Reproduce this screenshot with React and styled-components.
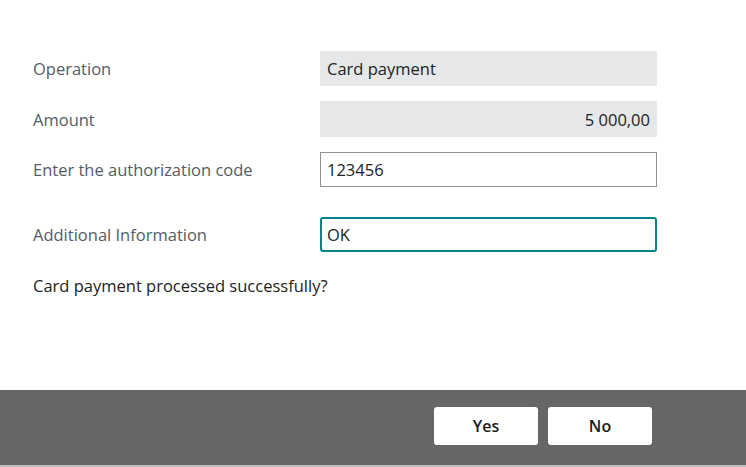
import React from 'react'
import styled, { createGlobalStyle } from 'styled-components'

const Global = createGlobalStyle`
  html, body { margin: 0; padding: 0; background: #fff; }
  body { font-family: "Open Sans", "Noto Sans", sans-serif; }
  * { box-sizing: border-box; }
`

export default function App() {
  return (
    <>
      <Global />
      <Page>
        <Form>
          <Row>
            <Label>Operation</Label>
            <ReadOnly>Card payment</ReadOnly>
          </Row>
          <Row $h={36}>
            <Label>Amount</Label>
            <ReadOnly $right>5 000,00</ReadOnly>
          </Row>
          <Row>
            <Label>Enter the authorization code</Label>
            <Field defaultValue="123456" />
          </Row>
          <Row $extra={15}>
            <Label>Additional Information</Label>
            <Field $focused defaultValue="OK" autoFocus />
          </Row>
          <Question>Card payment processed successfully?</Question>
        </Form>
        <Footer>
          <Button>Yes</Button>
          <Button>No</Button>
        </Footer>
        <Strip />
      </Page>
    </>
  )
}

const Page = styled.div`
  width: 746px;
  height: 467px;
  display: flex;
  flex-direction: column;
  overflow: hidden;
`

const Form = styled.div`
  flex: 1;
  padding: 51px 0 0 33px;
  display: flex;
  flex-direction: column;
  gap: 15px;
`

const Row = styled.div`
  display: grid;
  grid-template-columns: 287px 337px;
  align-items: center;
  height: ${p => p.$h || 35}px;
  margin-top: ${p => p.$extra || 0}px;
`

const Label = styled.div`
  font-size: 16.5px;
  color: #535c66;
`

const ReadOnly = styled.div`
  height: 100%;
  background: #e6e7e8;
  display: flex;
  align-items: center;
  justify-content: ${p => (p.$right ? 'flex-end' : 'flex-start')};
  padding: 0 7px;
  font-size: 16.5px;
  color: #222;
`

const Field = styled.input`
  height: 35px;
  width: 337px;
  border: ${p => (p.$focused ? '2px solid #00858a' : '1px solid #8a9099')};
  border-radius: ${p => (p.$focused ? '3px' : '0')};
  padding: 0 ${p => (p.$focused ? '5px' : '6px')};
  font-family: inherit;
  font-size: 16.5px;
  color: #222;
  caret-color: #111;
  outline: none;
  background: #fff;
`

const Question = styled.div`
  margin-top: 7px;
  font-size: 16.5px;
  color: #222;
`

const Footer = styled.div`
  height: 75px;
  background: #666;
  display: flex;
  align-items: flex-start;
  justify-content: flex-end;
  gap: 10px;
  padding: 17px 94px 0 0;
`

const Button = styled.button`
  width: 104px;
  height: 38px;
  background: #fff;
  border: none;
  border-radius: 3px;
  font-family: inherit;
  font-size: 16px;
  font-weight: 600;
  color: #1a1a1a;
  cursor: pointer;
`

const Strip = styled.div`
  height: 2px;
  background: #bdbdbd;
`
